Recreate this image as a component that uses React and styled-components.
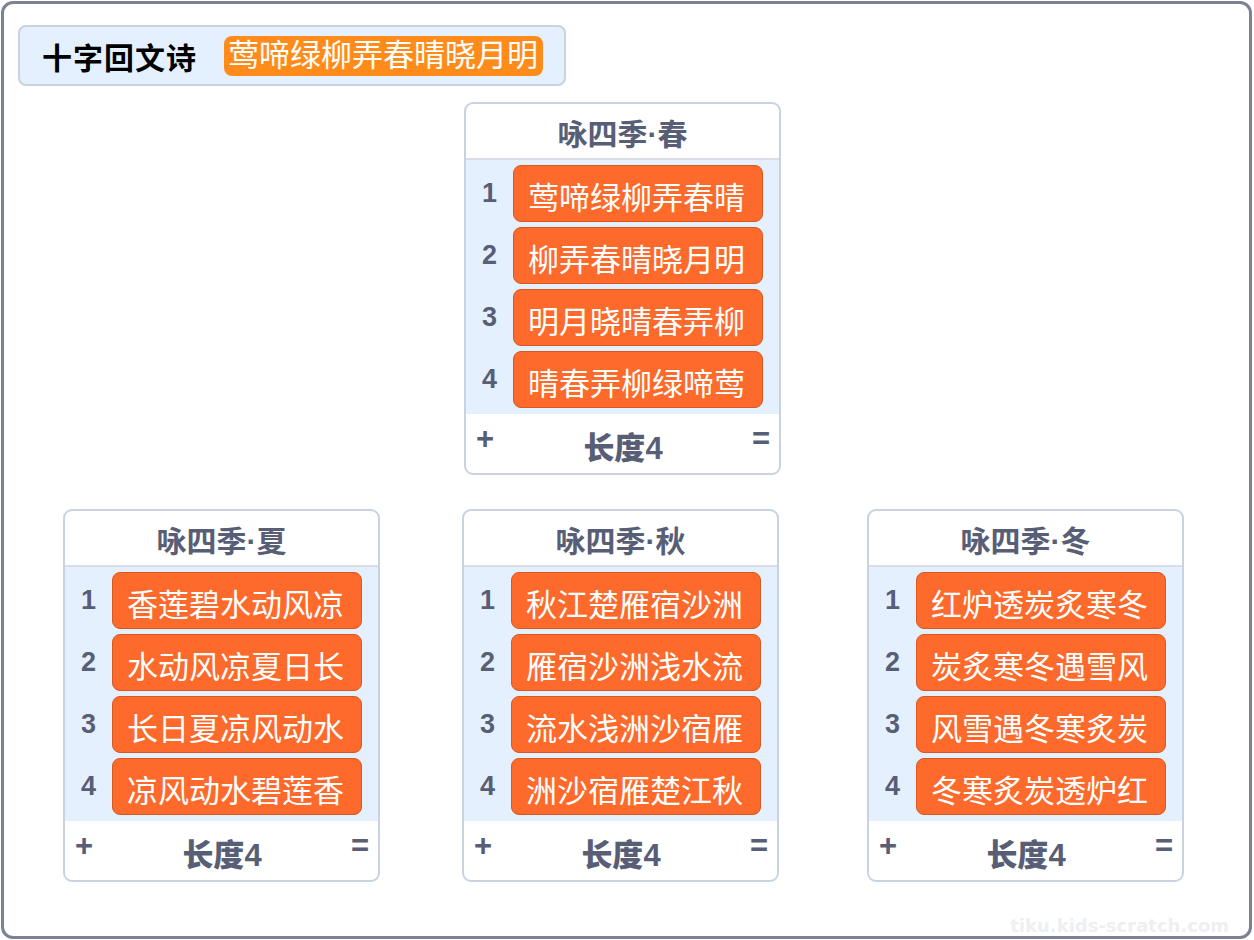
import React from "react";
import styled, { createGlobalStyle } from "styled-components";

const GlobalStyle = createGlobalStyle`
  html, body {
    margin: 0;
    padding: 0;
    background: #ffffff;
  }

  body {
    font-family: "Liberation Sans", "Noto Sans CJK SC", sans-serif;
  }
`;

const Frame = styled("div")`
  position: relative;
  box-sizing: border-box;
  width: 1251px;
  height: 938px;
  margin: 1px 0 0 1px;
  border: 3px solid #7c8193;
  border-radius: 12px;
  padding: 21px 14px;
  display: flex;
  flex-direction: column;
  align-items: flex-start;
`;

const TitleBar = styled("div")`
  box-sizing: border-box;
  height: 61px;
  display: flex;
  align-items: center;
  gap: 27px;
  padding: 0 21px 0 22px;
  background: #e5f0ff;
  border: 2px solid #c8d3df;
  border-radius: 8px;

  h1 {
    margin: 0;
    font-size: 30px;
    font-weight: 700;
    color: #000000;
    letter-spacing: 1px;
  }
`;

const Pill = styled("div")`
  height: 40px;
  display: flex;
  align-items: center;
  padding: 0 5px 0 4px;
  background: #ff8c1a;
  border-radius: 8px;
  color: #ffffff;
  font-size: 31px;
  line-height: 40px;
`;

const Row = styled("div")`
  display: flex;
  margin-top: ${(p) => p.$top}px;
`;

const Monitor = styled("div")`
  box-sizing: border-box;
  width: 317px;
  margin-left: ${(p) => p.$offset}px;
  border: 2px solid #c9d3e0;
  border-radius: 9px;
  background: #ffffff;
  overflow: hidden;
  color: #575e75;
`;

const MonitorHeader = styled("div")`
  height: 56px;
  display: flex;
  align-items: center;
  justify-content: center;
  padding-top: 2px;
  box-sizing: border-box;
  border-bottom: 2px solid #dadee4;
  font-size: 30px;
  font-weight: 700;
`;

const MonitorBody = styled("div")`
  background: #e5f0ff;
  padding: 5px 14px 6px 0;
  display: flex;
  flex-direction: column;
  gap: 5px;
`;

const ItemRow = styled("div")`
  display: flex;
  align-items: center;
  height: 57px;
`;

const Index = styled("div")`
  width: 47px;
  text-align: center;
  font-size: 27px;
  font-weight: 700;
  color: #575e75;
`;

const Item = styled("div")`
  box-sizing: border-box;
  width: 250px;
  height: 57px;
  display: flex;
  align-items: center;
  padding: 4px 0 0 14px;
  background: #fd6a2b;
  border: 1px solid #d9581f;
  border-radius: 8px;
  color: #ffffff;
  font-size: 31px;
  white-space: nowrap;
`;

const MonitorFooter = styled("div")`
  height: 59px;
  display: flex;
  align-items: center;
  justify-content: space-between;
  padding: 0 9px 0 10px;
  font-weight: 700;

  span {
    font-size: 31px;
    margin-top: -10px;
  }

  strong {
    font-size: 31px;
    margin-top: 4px;
  }
`;

const Watermark = styled("div")`
  position: absolute;
  right: 20px;
  bottom: 0px;
  font-family: "DejaVu Sans", sans-serif;
  font-size: 18px;
  font-weight: 700;
  color: #eeeff2;
`;

const seasons = {
  spring: {
    title: "咏四季·春",
    items: ["莺啼绿柳弄春晴", "柳弄春晴晓月明", "明月晓晴春弄柳", "晴春弄柳绿啼莺"],
  },
  summer: {
    title: "咏四季·夏",
    items: ["香莲碧水动风凉", "水动风凉夏日长", "长日夏凉风动水", "凉风动水碧莲香"],
  },
  autumn: {
    title: "咏四季·秋",
    items: ["秋江楚雁宿沙洲", "雁宿沙洲浅水流", "流水浅洲沙宿雁", "洲沙宿雁楚江秋"],
  },
  winter: {
    title: "咏四季·冬",
    items: ["红炉透炭炙寒冬", "炭炙寒冬遇雪风", "风雪遇冬寒炙炭", "冬寒炙炭透炉红"],
  },
};

function ListMonitor({ data, offset }) {
  return (
    <Monitor $offset={offset}>
      <MonitorHeader>{data.title}</MonitorHeader>
      <MonitorBody>
        {data.items.map((text, i) => (
          <ItemRow key={i}>
            <Index>{i + 1}</Index>
            <Item>{text}</Item>
          </ItemRow>
        ))}
      </MonitorBody>
      <MonitorFooter>
        <span>+</span>
        <strong>长度{data.items.length}</strong>
        <span>=</span>
      </MonitorFooter>
    </Monitor>
  );
}

export default function App() {
  return (
    <>
      <GlobalStyle />
      <Frame>
        <TitleBar>
          <h1>十字回文诗</h1>
          <Pill>莺啼绿柳弄春晴晓月明</Pill>
        </TitleBar>
        <Row $top={16}>
          <ListMonitor data={seasons.spring} offset={446} />
        </Row>
        <Row $top={34}>
          <ListMonitor data={seasons.summer} offset={45} />
          <ListMonitor data={seasons.autumn} offset={82} />
          <ListMonitor data={seasons.winter} offset={88} />
        </Row>
        <Watermark>tiku.kids-scratch.com</Watermark>
      </Frame>
    </>
  );
}
